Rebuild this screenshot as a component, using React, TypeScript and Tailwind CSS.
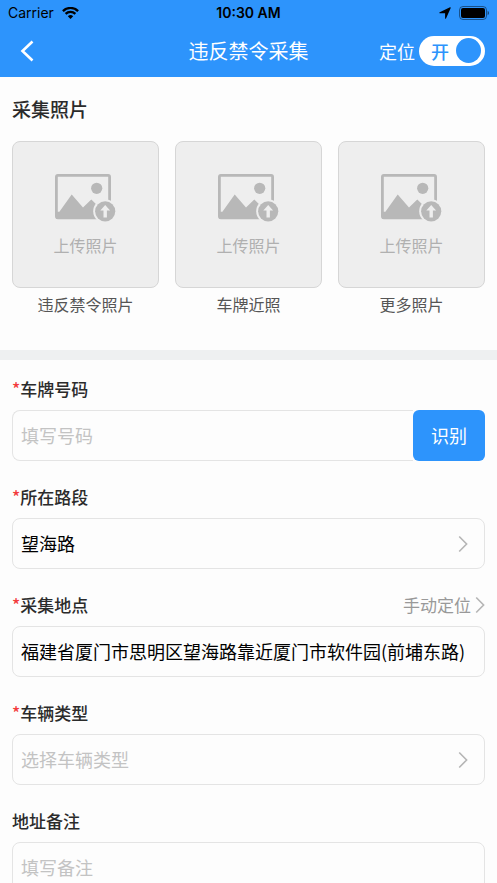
import { useState } from "react";
import type { ReactNode } from "react";

const photos = ["违反禁令照片", "车牌近照", "更多照片"];

const fieldClass =
  "block w-full h-[51px] appearance-none rounded-lg border border-[#e4e4e4] bg-[#fdfdfd] px-2 pb-0.5 text-lg placeholder:text-[#c3c3c3] focus:outline-none focus:border-[#2d94fc]";

function Chevron({ className }: { className: string }) {
  return (
    <svg viewBox="0 0 10 18" width="10" height="18" fill="none" className={className} aria-hidden="true">
      <path d="M1.2 1.5 8.6 9l-7.4 7.5" stroke="currentColor" strokeWidth="1.6" />
    </svg>
  );
}

function StatusBar() {
  return (
    <div className="grid grid-cols-3 items-center h-[26px] px-2 font-[Inter,'Liberation_Sans',sans-serif] text-sm text-black">
      <div className="flex items-center gap-2">
        <span>Carrier</span>
        <svg viewBox="0 0 17 12" width="17" height="12" aria-hidden="true">
          <path d="M8.5 12 5.8 9.2a3.9 3.9 0 0 1 5.4 0z" />
          <path d="M3.6 6.9a7 7 0 0 1 9.8 0" fill="none" stroke="#000" strokeWidth="2.3" />
          <path d="M.9 4.1a10.8 10.8 0 0 1 15.2 0" fill="none" stroke="#000" strokeWidth="2.3" />
        </svg>
      </div>
      <span className="text-center font-semibold">10:30 AM</span>
      <div className="flex items-center justify-end gap-2">
        <svg viewBox="0 0 12 12" width="12" height="12" aria-hidden="true">
          <path d="M11.7.9 7 11.5c-.3.5-.9.4-.9-.2V6.2H.9c-.6 0-.8-.7-.2-1L11 .3c.5-.2.9.2.7.6z" />
        </svg>
        <svg viewBox="0 0 30 14" width="30" height="14" aria-hidden="true">
          <rect x=".5" y=".5" width="27" height="13" rx="3.5" fill="none" stroke="#000" strokeOpacity=".45" />
          <rect x="2" y="2" width="24" height="10" rx="2" />
          <path d="M28.6 4.8a2.4 2.4 0 0 1 0 4.4z" fillOpacity=".5" />
        </svg>
      </div>
    </div>
  );
}

function UploadIcon() {
  return (
    <svg viewBox="0 0 61 48" width="61" height="48" aria-hidden="true">
      <rect x="1.4" y="1.4" width="53.2" height="42.4" rx="1.5" fill="none" stroke="#b8b8b8" strokeWidth="2.8" />
      <path d="M1 37.8h3.4L16.7 20.5 28 33.6l8.3-8L46 35v10H2a1 1 0 0 1-1-1z" fill="#b8b8b8" />
      <circle cx="41.7" cy="14.3" r="5.6" fill="#b8b8b8" />
      <circle cx="50.2" cy="37.3" r="12" fill="#eee" />
      <circle cx="50.2" cy="37.3" r="10.1" fill="#b8b8b8" />
      <path d="m50.2 31 4.9 5.6h-3.2v6.8h-3.4v-6.8h-3.2z" fill="#eee" />
    </svg>
  );
}

function Field({
  id,
  label,
  required,
  extra,
  children,
}: {
  id: string;
  label: string;
  required?: boolean;
  extra?: ReactNode;
  children: ReactNode;
}) {
  return (
    <div>
      <div className="flex items-center justify-between h-6 mb-[9px]">
        <label htmlFor={id} className="text-[17px] leading-6 font-medium text-[#2b2b2b]">
          {required && <span className="text-[#f33b3b]">*</span>}
          {label}
        </label>
        {extra}
      </div>
      {children}
    </div>
  );
}

export default function App() {
  const [locating, setLocating] = useState(true);
  const [plate, setPlate] = useState("");
  const [road, setRoad] = useState("望海路");
  const [place, setPlace] = useState("福建省厦门市思明区望海路靠近厦门市软件园(前埔东路)");
  const [vehicle, setVehicle] = useState("");
  const [note, setNote] = useState("");

  return (
    <div className="min-h-screen bg-[#fdfdfd] font-['Noto_Sans_CJK_SC',sans-serif] text-black">
      <header className="bg-[#2d94fc]">
        <StatusBar />
        <div className="grid grid-cols-[1fr_auto_1fr] items-center h-[51px] px-3 pb-0.5 text-white">
          <button type="button" aria-label="返回" className="justify-self-start px-2">
            <svg viewBox="0 0 14 22" width="14" height="22" fill="none" aria-hidden="true">
              <path d="M12.5 1.5 2.5 11l10 9.5" stroke="currentColor" strokeWidth="2.6" />
            </svg>
          </button>
          <h1 className="text-xl">违反禁令采集</h1>
          <label className="flex items-center justify-self-end gap-1 text-lg cursor-pointer">
            定位
            <input
              type="checkbox"
              role="switch"
              checked={locating}
              onChange={(e) => setLocating(e.target.checked)}
              className="peer sr-only"
            />
            <span className="flex items-center justify-between w-[66px] h-[30px] rounded-full bg-white pl-3 pr-1 font-medium text-[#2d94fc] not-peer-checked:flex-row-reverse not-peer-checked:opacity-70">
              {locating ? "开" : "关"}
              <span className="size-[25px] rounded-full bg-[#2d94fc]" />
            </span>
          </label>
        </div>
      </header>

      <main>
        <section className="px-3 pt-[18px] pb-[34px]">
          <h2 className="mb-[18px] text-[19px] leading-7 font-medium text-[#2b2b2b]">采集照片</h2>
          <div className="grid grid-cols-3 gap-4">
            {photos.map((name) => (
              <figure key={name}>
                <button
                  type="button"
                  className="flex flex-col items-center justify-center gap-[11px] w-full aspect-square pt-0.5 rounded-lg border border-[#d6d6d6] bg-[#eee] text-base leading-6 text-[#b0b0b0]"
                >
                  <UploadIcon />
                  上传照片
                </button>
                <figcaption className="mt-1 text-center text-base leading-6 text-[#555]">{name}</figcaption>
              </figure>
            ))}
          </div>
        </section>

        <div className="h-[10px] bg-[#eef0f1]" />

        <form className="flex flex-col gap-6 px-3 pt-[17px] pb-6" onSubmit={(e) => e.preventDefault()}>
          <Field id="plate" label="车牌号码" required>
            <div className="flex">
              <input
                id="plate"
                type="text"
                value={plate}
                onChange={(e) => setPlate(e.target.value)}
                placeholder="填写号码"
                className={`${fieldClass} flex-1 min-w-0 rounded-r-none border-r-0`}
              />
              <button type="button" className="w-[72px] pb-0.5 rounded-md bg-[#2d94fc] text-lg text-white">
                识别
              </button>
            </div>
          </Field>

          <Field id="road" label="所在路段" required>
            <div className="relative">
              <select id="road" value={road} onChange={(e) => setRoad(e.target.value)} className={fieldClass}>
                <option>望海路</option>
              </select>
              <Chevron className="absolute right-[17px] inset-y-0 my-auto text-[#b5b5b5] pointer-events-none" />
            </div>
          </Field>

          <Field
            id="place"
            label="采集地点"
            required
            extra={
              <button type="button" className="flex items-center gap-1 text-[17px] leading-6 text-[#999]">
                手动定位
                <Chevron className="text-[#b5b5b5]" />
              </button>
            }
          >
            <input
              id="place"
              type="text"
              value={place}
              onChange={(e) => setPlace(e.target.value)}
              className={fieldClass}
            />
          </Field>

          <Field id="vehicle" label="车辆类型" required>
            <div className="relative">
              <select
                id="vehicle"
                value={vehicle}
                onChange={(e) => setVehicle(e.target.value)}
                className={`${fieldClass} ${vehicle ? "text-black" : "text-[#c3c3c3]"}`}
              >
                <option value="">选择车辆类型</option>
              </select>
              <Chevron className="absolute right-[17px] inset-y-0 my-auto text-[#b5b5b5] pointer-events-none" />
            </div>
          </Field>

          <Field id="note" label="地址备注">
            <input
              id="note"
              type="text"
              value={note}
              onChange={(e) => setNote(e.target.value)}
              placeholder="填写备注"
              className={fieldClass}
            />
          </Field>
        </form>
      </main>
    </div>
  );
}
